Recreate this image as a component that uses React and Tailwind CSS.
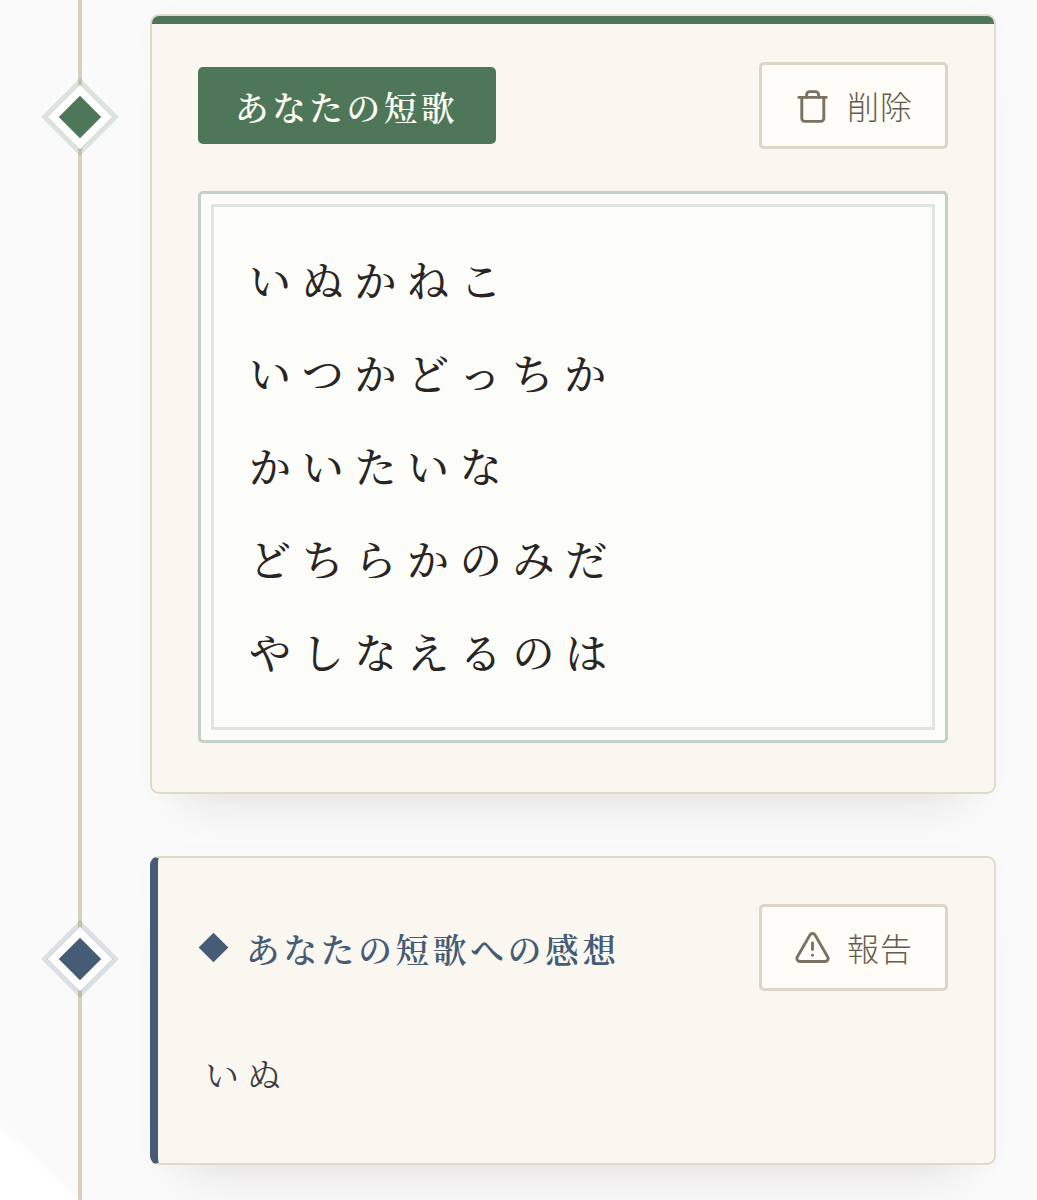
const poem = ['いぬかねこ', 'いつかどっちか', 'かいたいな', 'どちらかのみだ', 'やしなえるのは'];

function TrashIcon() {
  return (
    <svg className="w-9 h-9 shrink-0" viewBox="0 0 36 36" fill="none" stroke="currentColor" strokeWidth="2.9" strokeLinecap="round" strokeLinejoin="round">
      <path d="M3.8 9.4h27.4" />
      <path d="M6.8 9.4v21a3 3 0 0 0 3 3h16a3 3 0 0 0 3-3v-21" />
      <path d="M11.6 9.4V6.8a3.2 3.2 0 0 1 3.2-3.2h5.6a3.2 3.2 0 0 1 3.2 3.2v2.6" />
    </svg>
  );
}

function AlertIcon() {
  return (
    <svg className="w-9 h-9 shrink-0" viewBox="0 0 36 36" fill="none" stroke="currentColor" strokeWidth="2.9" strokeLinecap="round" strokeLinejoin="round">
      <path d="M15 4.9 2.3 27a3 3 0 0 0 2.6 4.5h25.2a3 3 0 0 0 2.6-4.5L20 4.9a2.9 2.9 0 0 0-5 0Z" />
      <path d="M17.5 13v6.5" />
      <path d="M17.5 25.3h.01" />
    </svg>
  );
}

function ActionButton({ icon, children }) {
  return (
    <button className="flex items-center w-[189px] h-[87px] pl-[33px] gap-4 rounded-[5px] border-[3px] border-[#dcd5c8] bg-[#fdfcf7] text-[#7a7163] font-['Noto_Sans_CJK_JP',sans-serif] font-light text-[32px] leading-none tracking-[1px] whitespace-nowrap">
      {icon}
      <span className="-mt-0.5 text-[#655c4f]">{children}</span>
    </button>
  );
}

function Marker({ className }) {
  return (
    <div className="w-[150px] shrink-0 pl-[56.5px]">
      <div className={`h-[46px] w-[46px] rotate-45 border-8 border-white ${className}`}></div>
    </div>
  );
}

export default function App() {
  return (
    <div className="relative h-[1200px] w-[1037px] overflow-hidden bg-[#fafafa] font-['Noto_Serif_CJK_JP','Noto_Serif_JP','Noto_Sans_CJK_JP',serif]">
      {/* Corner fade */}
      <div className="absolute bottom-0 left-0 h-[86px] w-[78px] bg-[linear-gradient(42deg,#ffffff_43%,#fafafa_50%)]"></div>

      {/* Timeline rail */}
      <div className="absolute inset-y-0 left-[78px] w-1 bg-[#d8d0c0]"></div>

      <div className="relative flex flex-col gap-[62px] pt-[14px]">
        {/* Tanka */}
        <section className="flex items-start">
          <div className="pt-[80px]">
            <Marker className="bg-[#4d7758] shadow-[0_0_0_4.5px_rgba(77,119,88,0.17)]" />
          </div>
          <article className="flex flex-col w-[846px] h-[780px] rounded-[9px] border-2 border-[#e0dac9] bg-[#faf7f0] shadow-[0_38px_46px_-38px_rgba(70,35,45,0.16),0_0_34px_rgba(60,60,100,0.015)] overflow-hidden">
            <div className="h-2 shrink-0 bg-[#4d7758]"></div>
            <div className="px-[46px] pt-[38px]">
              <div className="flex items-center justify-between">
                <h2 className="flex items-center h-[77px] w-[298px] pl-[37px] pt-0.5 rounded-[5px] bg-[#4d7758] text-[#fdfdf3] text-[33.6px] font-semibold tracking-[3.6px] leading-none whitespace-nowrap">
                  あなたの短歌
                </h2>
                <ActionButton icon={<TrashIcon />}>削除</ActionButton>
              </div>
              <div className="mt-[42px] h-[552px] rounded-[5px] border-[3px] border-[#c2d0c6] bg-[#fcfdf8] p-[10px]">
                <div className="h-full border-[3px] border-[#dfe5df] pt-[26px] pl-[35px] text-[#292524] text-[42px] font-medium leading-[93px] tracking-[10.7px] whitespace-nowrap">
                  {poem.map((line) => (
                    <p key={line}>{line}</p>
                  ))}
                </div>
              </div>
            </div>
          </article>
        </section>

        {/* Comment */}
        <section className="flex items-start">
          <div className="pt-[80px]">
            <Marker className="bg-[#455b76] shadow-[0_0_0_4.5px_rgba(69,91,118,0.17)]" />
          </div>
          <article className="w-[846px] h-[309px] rounded-[9px] border-2 border-l-8 border-[#e0dac9] border-l-[#455b76] bg-[#faf7f0] pl-10 pr-[46px] pt-[46px] shadow-[0_38px_46px_-38px_rgba(70,35,45,0.16),0_0_34px_rgba(60,60,100,0.015)]">
            <div className="flex items-center justify-between">
              <h2 className="flex items-center gap-[22px] pl-[5px] text-[#455b76] text-[33.6px] font-semibold tracking-[3.8px] leading-none whitespace-nowrap">
                <span className="h-[21px] w-[21px] rotate-45 bg-[#455b76]"></span>
                <span className="pt-0.5">あなたの短歌への感想</span>
              </h2>
              <ActionButton icon={<AlertIcon />}>報告</ActionButton>
            </div>
            <p className="mt-[49px] pl-[7px] text-[#3b3c44] text-[34px] leading-[68px] tracking-[8px]">いぬ</p>
          </article>
        </section>
      </div>
    </div>
  );
}
